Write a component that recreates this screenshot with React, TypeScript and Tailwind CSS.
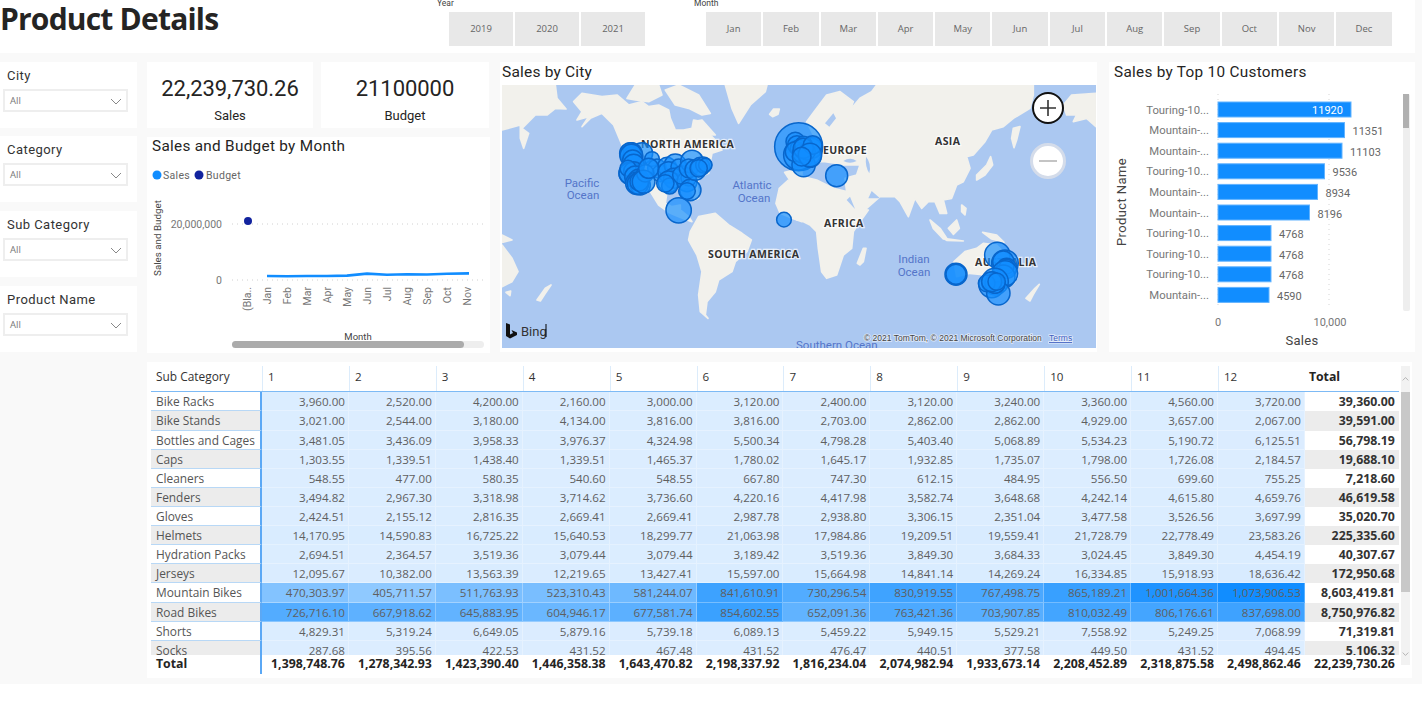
import React from "react";

const years = ["2019", "2020", "2021"];
const months = ["Jan", "Feb", "Mar", "Apr", "May", "Jun", "Jul", "Aug", "Sep", "Oct", "Nov", "Dec"];

const rows: [string, string[]][] = [
  ["Bike Racks", "3,960.00 2,520.00 4,200.00 2,160.00 3,000.00 3,120.00 2,400.00 3,120.00 3,240.00 3,360.00 4,560.00 3,720.00 39,360.00".split(" ")],
  ["Bike Stands", "3,021.00 2,544.00 3,180.00 4,134.00 3,816.00 3,816.00 2,703.00 2,862.00 2,862.00 4,929.00 3,657.00 2,067.00 39,591.00".split(" ")],
  ["Bottles and Cages", "3,481.05 3,436.09 3,958.33 3,976.37 4,324.98 5,500.34 4,798.28 5,403.40 5,068.89 5,534.23 5,190.72 6,125.51 56,798.19".split(" ")],
  ["Caps", "1,303.55 1,339.51 1,438.40 1,339.51 1,465.37 1,780.02 1,645.17 1,932.85 1,735.07 1,798.00 1,726.08 2,184.57 19,688.10".split(" ")],
  ["Cleaners", "548.55 477.00 580.35 540.60 548.55 667.80 747.30 612.15 484.95 556.50 699.60 755.25 7,218.60".split(" ")],
  ["Fenders", "3,494.82 2,967.30 3,318.98 3,714.62 3,736.60 4,220.16 4,417.98 3,582.74 3,648.68 4,242.14 4,615.80 4,659.76 46,619.58".split(" ")],
  ["Gloves", "2,424.51 2,155.12 2,816.35 2,669.41 2,669.41 2,987.78 2,938.80 3,306.15 2,351.04 3,477.58 3,526.56 3,697.99 35,020.70".split(" ")],
  ["Helmets", "14,170.95 14,590.83 16,725.22 15,640.53 18,299.77 21,063.98 17,984.86 19,209.51 19,559.41 21,728.79 22,778.49 23,583.26 225,335.60".split(" ")],
  ["Hydration Packs", "2,694.51 2,364.57 3,519.36 3,079.44 3,079.44 3,189.42 3,519.36 3,849.30 3,684.33 3,024.45 3,849.30 4,454.19 40,307.67".split(" ")],
  ["Jerseys", "12,095.67 10,382.00 13,563.39 12,219.65 13,427.41 15,597.00 15,664.98 14,841.14 14,269.24 16,334.85 15,918.93 18,636.42 172,950.68".split(" ")],
  ["Mountain Bikes", "470,303.97 405,711.57 511,763.93 523,310.43 581,244.07 841,610.91 730,296.54 830,919.55 767,498.75 865,189.21 1,001,664.36 1,073,906.53 8,603,419.81".split(" ")],
  ["Road Bikes", "726,716.10 667,918.62 645,883.95 604,946.17 677,581.74 854,602.55 652,091.36 763,421.36 703,907.85 810,032.49 806,176.61 837,698.00 8,750,976.82".split(" ")],
  ["Shorts", "4,829.31 5,319.24 6,649.05 5,879.16 5,739.18 6,089.13 5,459.22 5,949.15 5,529.21 7,558.92 5,249.25 7,068.99 71,319.81".split(" ")],
  ["Socks", "287.68 395.56 422.53 431.52 467.48 431.52 476.47 440.51 377.58 449.50 431.52 494.45 5,106.32".split(" ")],
];
const totals = "1,398,748.76 1,278,342.93 1,423,390.40 1,446,358.38 1,643,470.82 2,198,337.92 1,816,234.04 2,074,982.94 1,933,673.14 2,208,452.89 2,318,875.58 2,498,862.46 22,239,730.26".split(" ");

function heat(v: string) {
  const t = Math.min(1, parseFloat(v.replace(/,/g, "")) / 1073906);
  const mix = (a: number, b: number) => Math.round(a + (b - a) * t);
  return `rgb(${mix(220, 17)},${mix(237, 141)},255)`;
}

function Chevron({ className }: { className: string }) {
  return (
    <svg viewBox="0 0 12 7" className={className} fill="none" stroke="currentColor" strokeWidth="1">
      <path d="M1 1l5 5 5-5" />
    </svg>
  );
}

function Slicer({ title, className }: { title: string; className: string }) {
  return (
    <div className={`h-[66px] w-[137px] bg-white pl-[3px] pr-[9px] ${className}`}>
      <div className="h-[27px] pl-[4px] pt-[5px] font-['Roboto'] text-[13px] leading-[17px] tracking-[0.45px] text-[#333333]">{title}</div>
      <div className="flex h-[23px] items-center justify-between border-2 border-[#eeeeee] pl-[5px] pr-[4px] pt-[1px] font-['Open_Sans'] text-[9.5px] text-[#777777]">
        <span>All</span>
        <Chevron className="h-[7px] w-[12px] text-[#888888]" />
      </div>
    </div>
  );
}

function Kpi({ value, label, className }: { value: string; label: string; className: string }) {
  return (
    <div className={`flex h-[66px] flex-col items-center bg-white pt-[12px] font-['Roboto'] text-[#252423] ${className}`}>
      <div className="h-[30px] text-[22px] leading-[30px] tracking-[-0.05px]">{value}</div>
      <div className="mt-[4px] text-[13px] leading-[16px]">{label}</div>
    </div>
  );
}

function LineChart() {
  const labels = ["(Bla..", ...months.slice(0, 11)];
  return (
    <svg viewBox="147 161 343 192" className="h-[192px] w-[343px]" fontFamily="Roboto">
      <circle cx="157" cy="175" r="4.5" fill="#118DFF" />
      <text x="163" y="179" fontSize="10.5" fill="#666666" letterSpacing=".3">Sales</text>
      <circle cx="199" cy="175" r="4.5" fill="#12239E" />
      <text x="206" y="179" fontSize="10.5" fill="#666666" letterSpacing=".3">Budget</text>
      <text transform="translate(161 238) rotate(-90)" textAnchor="middle" fontSize="9.8" fill="#444444">Sales and Budget</text>
      <text x="222" y="228" textAnchor="end" fontSize="10.5" fill="#777777">20,000,000</text>
      <text x="222" y="284" textAnchor="end" fontSize="10.5" fill="#777777">0</text>
      <line x1="232" x2="484" y1="224" y2="224" stroke="#d0d0d0" strokeDasharray="1 4" />
      <line x1="232" x2="484" y1="280" y2="280" stroke="#d0d0d0" strokeDasharray="1 4" />
      <circle cx="248" cy="221" r="4" fill="#12239E" />
      <path d="M267 276 L287 276.3 L307 276 L327 276 L347 275.6 L367 273.6 L387 274.8 L407 274.2 L427 274.5 L447 273.8 L469 273.4" fill="none" stroke="#118DFF" strokeWidth="2.6" />
      {labels.map((m, i) => (
        <text key={m} transform={`translate(${251 + i * 20} 287) rotate(-90)`} textAnchor="end" fontSize="10.5" fill="#777777">{m}</text>
      ))}
      <text x="358" y="339.5" textAnchor="middle" fontSize="9.5" fill="#444444">Month</text>
      <rect x="232" y="341" width="252" height="7" rx="3.5" fill="#eeeeee" />
      <rect x="232" y="341" width="232" height="7" rx="3.5" fill="#ababab" />
    </svg>
  );
}

const bars: [string, number, number, number][] = [
  ["Touring-10...", 11920, 1351, 1],
  ["Mountain-...", 11351, 1344.5, 0],
  ["Mountain-...", 11103, 1342, 0],
  ["Touring-10...", 9536, 1324.5, 0],
  ["Mountain-...", 8934, 1317.5, 0],
  ["Mountain-...", 8196, 1309.5, 0],
  ["Touring-10...", 4768, 1271, 0],
  ["Touring-10...", 4768, 1271, 0],
  ["Touring-10...", 4768, 1271, 0],
  ["Mountain-...", 4590, 1269, 0],
];

function BarChart() {
  return (
    <svg viewBox="1109 86 306 266" className="h-[266px] w-[306px]" fontFamily="Roboto">
      <text transform="translate(1126 202) rotate(-90)" textAnchor="middle" fontSize="13" fill="#444444" letterSpacing=".4">Product Name</text>
      <line x1="1218" x2="1218" y1="94" y2="306" stroke="#d5d5d5" strokeDasharray="1 4" />
      <line x1="1329" x2="1329" y1="94" y2="306" stroke="#d5d5d5" strokeDasharray="1 4" />
      {bars.map(([name, v, right, inside], i) => {
        const y = 102 + i * 20.6;
        return (
          <g key={i}>
            <text x="1209" y={y + 11.5} textAnchor="end" fontSize="11.3" fill="#777777">{name}</text>
            <rect x="1218" y={y} width={right - 1218} height="15" fill="#118DFF" stroke="#62b3ff" strokeWidth="1" />
            {inside ? (
              <text x="1343" y={y + 12} textAnchor="end" fontSize="11" fill="#ffffff">{v}</text>
            ) : (
              <text x={right + 8} y={y + 12.5} fontSize="11" fill="#666666">{v}</text>
            )}
          </g>
        );
      })}
      <text x="1218" y="326" textAnchor="middle" fontSize="11" fill="#777777">0</text>
      <text x="1330" y="326" textAnchor="middle" fontSize="11" fill="#777777">10,000</text>
      <text x="1302" y="345" textAnchor="middle" fontSize="13" fill="#444444" letterSpacing=".3">Sales</text>
      <rect x="1403" y="94" width="7" height="217" rx="2" fill="#eeeeee" />
      <rect x="1403" y="94" width="6" height="34" fill="#b0b0b0" />
    </svg>
  );
}

const land = "#f2f1ec";
const water = "#abc8f1";
const leftLand = [
  "M215,50 L240,25 L300,35 L345,30 L380,60 L420,50 L440,65 L470,60 L500,75 L505,100 L520,135 L545,135 L570,130 L575,105 L600,110 L625,150 L640,165 L660,195 L630,205 L625,230 L620,265 L595,275 L585,300 L590,340 L578,345 L565,305 L520,310 L495,320 L490,355 L510,365 L535,360 L535,375 L560,395 L570,410 L555,405 L530,395 L505,385 L470,360 L445,320 L425,300 L400,270 L365,230 L360,180 L335,120 L300,85 L265,100 L240,125 L260,95 L225,105 L240,80 Z",
  "M375,40 L400,0 L470,0 L480,30 L440,50 L400,45 Z",
  "M490,15 L530,0 L590,30 L625,85 L600,90 L560,70 L520,60 Z",
  "M575,110 L600,105 L640,150 L610,150 Z",
  "M670,0 L795,0 L790,20 L745,60 L710,115 L690,70 Z",
  "M803,88 L815,72 L832,72 L828,88 L812,95 Z",
  "M565,440 L590,395 L640,385 L680,420 L720,445 L748,465 L735,500 L700,530 L690,560 L650,585 L640,620 L615,650 L610,690 L618,700 L595,680 L590,630 L600,560 L585,510 L560,465 Z",
  "M0,0 L160,0 L165,40 L192,72 L160,70 L135,90 L100,90 L60,130 L80,145 L65,190 L55,160 L55,120 L0,135 Z",
  "M0,480 L30,520 L48,560 L30,590 L0,605 Z",
  "M0,450 L30,465 L0,472 Z",
  "M105,645 L130,610 L147,600 L130,625 L115,648 Z",
  "M12,622 L26,618 L24,632 Z",
  "M900,275 L860,285 L832,310 L822,355 L835,385 L870,400 L900,410 Z",
  "M848,262 L900,250 L900,280 L860,280 Z",
  "M850,210 L880,200 L885,230 L860,235 Z",
];
const rightLand = [
  "M-10,270 L50,285 L100,310 L140,320 L165,370 L205,375 L180,410 L160,440 L155,490 L130,510 L110,570 L80,580 L65,560 L55,490 L50,440 L30,420 L0,405 L-10,405 Z",
  "M20,110 L50,70 L80,30 L120,20 L160,50 L150,75 L180,40 L215,20 L230,0 L700,0 L700,30 L690,70 L640,100 L610,125 L575,135 L555,170 L520,210 L500,215 L510,250 L490,290 L470,300 L455,340 L430,345 L440,385 L420,385 L405,350 L385,350 L365,370 L345,340 L325,395 L300,350 L285,335 L240,335 L200,370 L165,370 L140,320 L135,280 L170,270 L180,240 L130,240 L110,235 L75,230 L40,230 L15,200 L40,150 Z",
  "M640,130 L660,125 L650,165 L642,188 L635,160 Z",
  "M530,270 L560,240 L572,215 L578,240 L555,270 L530,285 Z",
  "M790,60 L815,30 L888,25 L888,125 L860,100 L820,110 L830,90 L800,90 Z",
  "M390,405 L420,430 L440,460 L430,462 L400,430 Z",
  "M445,430 L470,405 L478,430 L460,448 Z",
  "M430,460 L490,468 L440,466 Z",
  "M548,442 L590,450 L612,472 L575,462 Z",
  "M485,360 L498,370 L495,390 L485,380 Z",
  "M172,535 L190,490 L198,490 L190,530 L180,540 Z",
  "M462,530 L495,500 L530,490 L550,475 L590,480 L640,530 L645,590 L610,620 L590,605 L555,570 L510,565 L470,575 Z",
  "M678,640 L705,610 L718,598 L700,628 L690,648 Z",
];
const usCircles: number[][] = [
  [420, 205, 32], [450, 222, 22], [465, 250, 28], [475, 265, 25], [495, 245, 28], [388, 205, 32], [392, 215, 30], [390, 200, 26], [385, 205, 32], [388, 212, 34], [392, 225, 30], [395, 240, 32], [385, 265, 34], [383, 265, 32], [395, 260, 30], [378, 250, 24], [400, 275, 32], [410, 285, 32], [405, 295, 34], [415, 300, 30], [408, 296, 32], [412, 290, 28], [430, 265, 26], [425, 290, 34], [440, 250, 30],
  [520, 240, 33], [500, 262, 32], [530, 245, 23], [515, 280, 30], [500, 290, 32], [503, 303, 24], [490, 295, 26], [555, 290, 30], [560, 280, 23], [540, 270, 28], [565, 315, 32], [555, 318, 25], [570, 230, 34], [560, 250, 28], [580, 255, 31], [595, 245, 28], [605, 240, 24], [610, 240, 20], [590, 250, 26],
];
const leftCircles: number[][] = [
  ...usCircles,
  [530, 376, 38], [846, 404, 22],
  [890, 185, 72], [890, 210, 45], [905, 240, 35], [880, 170, 28], [885, 180, 28], [890, 190, 25], [895, 195, 22], [880, 200, 30], [900, 205, 28], [930, 190, 30], [925, 215, 32], [935, 180, 25], [905, 180, 26], [915, 200, 25],
];
const rightCircles: number[][] = [
  [10, 190, 30], [38, 180, 28], [30, 210, 35], [5, 215, 28],
  [110, 272, 33], [468, 568, 33], [468, 568, 30],
  [592, 510, 38], [615, 535, 40], [610, 530, 32], [620, 550, 30], [620, 545, 22], [610, 575, 35], [615, 565, 38], [585, 590, 40], [575, 600, 38], [595, 625, 35], [585, 595, 30], [560, 595, 25], [575, 590, 30], [590, 590, 26],
];

function MapView() {
  const halo = { stroke: "#ffffff", strokeWidth: 2.5, paintOrder: "stroke" as const, strokeOpacity: 0.7 };
  return (
    <div className="relative h-[263px] w-[594px] overflow-hidden bg-[#abc8f1]">
      <svg viewBox="0 0 594 263" className="h-[263px] w-[594px]" fontFamily="Open Sans">
        <defs>
          <filter id="soft" x="-5%" y="-5%" width="110%" height="110%">
            <feGaussianBlur stdDeviation="0.5" />
          </filter>
        </defs>
        <g filter="url(#soft)">
          <g transform="scale(0.3333)" fill={land} stroke={land} strokeWidth="5" strokeLinejoin="round">
            {leftLand.map((d, i) => <path key={i} d={d} />)}
          </g>
          <g transform="translate(298 0) scale(0.3333)" fill={land} stroke={land} strokeWidth="5" strokeLinejoin="round">
            {rightLand.map((d, i) => <path key={i} d={d} />)}
          </g>
          <g transform="translate(298 0) scale(0.3333)" fill={water}>
            <path d="M130,228 Q150,215 170,228 Q150,238 130,228 Z" />
            <path d="M198,215 Q215,235 208,265 Q195,245 198,215 Z" />
            <path d="M140,345 L165,372 L150,335 Z" />
            <path d="M75,115 L100,85 L108,100 L88,125 Z" />
            <path d="M205,340 L240,340 L215,318 Z" />
          </g>
        </g>
        <g fontSize="10.5" fontWeight="700" fill="#333333" letterSpacing=".4" style={halo}>
          <text x="139" y="63">NORTH AMERICA</text>
          <text x="321" y="69">EUROPE</text>
          <text x="433" y="60">ASIA</text>
          <text x="322" y="142">AFRICA</text>
          <text x="206" y="173">SOUTH AMERICA</text>
          <text x="473" y="181">AUSTRALIA</text>
        </g>
        <g fontSize="11.5" fill="#5475c9" textAnchor="middle" fontFamily="Roboto">
          <text x="80" y="102">Pacific</text>
          <text x="81" y="114">Ocean</text>
          <text x="250" y="104">Atlantic</text>
          <text x="252" y="117">Ocean</text>
          <text x="412" y="178">Indian</text>
          <text x="412" y="191">Ocean</text>
          <text x="294" y="264" textAnchor="start">Southern Ocean</text>
        </g>
        <g transform="scale(0.3333)" fill="#118DFF" fillOpacity="0.68" stroke="#0866cc" strokeWidth="4.5">
          {leftCircles.map(([x, y, r], i) => <circle key={i} cx={x} cy={y} r={r} />)}
        </g>
        <g transform="translate(298 0) scale(0.3333)" fill="#118DFF" fillOpacity="0.68" stroke="#0866cc" strokeWidth="4.5">
          {rightCircles.map(([x, y, r], i) => <circle key={i} cx={x} cy={y} r={r} />)}
        </g>
        <path d="M4,238 L8,239.5 L8,249.5 L11,248 L9.5,245 L15,247.5 L15,250 L8,253.5 L4,251 Z" fill="#111111" />
        <text x="19" y="251" fontSize="13" fontFamily="Roboto" fill="#333333">Bing</text>
        <line x1="44" x2="44" y1="239" y2="252" stroke="#000000" strokeWidth="1" />
        <g fontFamily="Liberation Sans" fontSize="8.5" fill="#444444" stroke="#ffffff" strokeWidth="1.6" strokeOpacity="0.6" style={{ paintOrder: "stroke" }}>
          <text x="362" y="256">© 2021 TomTom, © 2021 Microsoft Corporation</text>
          <text x="547" y="256" fill="#3f5fc0" textDecoration="underline">Terms</text>
        </g>
      </svg>
      <div className="absolute left-[530px] top-[7px] flex h-[32px] w-[32px] items-center justify-center rounded-full border-2 border-[#111111] bg-white">
        <svg viewBox="0 0 18 18" className="h-[18px] w-[18px]" stroke="#333333" strokeWidth="1.6"><path d="M9 1v16M1 9h16" /></svg>
      </div>
      <div className="absolute left-[528px] top-[58px] flex h-[36px] w-[36px] items-center justify-center rounded-full border-[3px] border-[#d4dcea] bg-white">
        <svg viewBox="0 0 18 2" className="h-[2px] w-[18px]" stroke="#c4c4c4" strokeWidth="2"><path d="M0 1h18" /></svg>
      </div>
    </div>
  );
}

const gridCols = "grid-cols-[111px_repeat(12,86.92px)_94px]";

function Matrix() {
  return (
    <div className="ml-[147px] mt-[9px] flex h-[316px] w-[1265px] bg-white pl-[4px] pt-[4px] font-['Open_Sans'] text-[11.6px] text-[#666666]">
      <div className="w-[1248px]">
        <div className={`grid h-[26px] ${gridCols} border-b border-[#7dbaf5] text-[#333333]`}>
          <div className="flex items-center pb-[4px] pl-[5px] text-[11.9px]">Sub Category</div>
          {Array.from({ length: 12 }, (_, i) => (
            <div key={i} className="flex items-center border-l border-[#dcecfb] pb-[4px] pl-[5px]">{i + 1}</div>
          ))}
          <div className="flex items-center pb-[3px] pl-[4px] text-[12.3px] font-bold text-[#252423]">Total</div>
        </div>
        <div className={`grid h-[263px] overflow-hidden ${gridCols} grid-rows-[19px_20px_19px_19px_19px_19px_19px_19px_19px_19px_20px_19px_19px_19px]`}>
          {rows.map(([name, vals], r) => (
            <React.Fragment key={name}>
              <div className={`flex items-center whitespace-nowrap border-b border-r-2 border-b-[#b8d8f6] border-r-[#5ba8f5] pl-[5px] pt-[1px] text-[11.9px] text-[#555555] ${r % 2 ? "bg-[#ececec]" : "bg-white"}`}>{name}</div>
              {vals.slice(0, 12).map((v, c) => (
                <div key={c} className="flex items-center justify-end border-b border-r border-white/30 pr-[3px] pt-[1px] text-[#5f5f5f]" style={{ backgroundColor: heat(v) }}>{v}</div>
              ))}
              <div className={`flex items-center justify-end pr-[4px] pt-[1px] text-[12.3px] font-bold text-[#333333] ${r % 2 ? "bg-[#ececec]" : "bg-white"}`}>{vals[12]}</div>
            </React.Fragment>
          ))}
        </div>
        <div className={`grid h-[19px] ${gridCols} text-[12.3px] font-bold text-[#252423]`}>
          <div className="flex items-center border-r-2 border-[#5ba8f5] pl-[5px]">Total</div>
          {totals.map((t, i) => (
            <div key={i} className="flex items-center justify-end whitespace-nowrap pr-[4px]">{t}</div>
          ))}
        </div>
      </div>
      <div className="ml-[2px] flex h-[299px] w-[9px] flex-col items-center bg-[#f2f2f2]">
        <div className="flex h-[26px] items-center"><Chevron className="h-[4px] w-[7px] rotate-180 text-[#888888]" /></div>
        <div className="h-[200px] w-full bg-[#c8c8c8]" />
        <div className="flex flex-1 items-end pb-[9px]"><Chevron className="h-[4px] w-[7px] text-[#888888]" /></div>
      </div>
    </div>
  );
}

export default function App() {
  return (
    <div className="h-[709px] w-[1422px] overflow-hidden bg-white">
      <div className="h-[684px] bg-[#f9f9f9]">
        <header className="flex h-[53px] w-[1415px] overflow-hidden bg-white">
          <h1 className="w-[437px] font-['Open_Sans'] text-[30px] font-bold leading-[38px] tracking-[-0.8px] text-[#252423]">Product Details</h1>
          <div className="w-[257px] text-[#444444]">
            <div className="h-[12px] font-['Roboto'] text-[8.5px] leading-[6px]">Year</div>
            <div className="ml-[12px] flex gap-[2px]">
              {years.map((y) => (
                <div key={y} className="flex h-[34px] w-[64px] items-center justify-center bg-[#e8e8e8] font-['Open_Sans'] text-[9.5px] text-[#666666]">{y}</div>
              ))}
            </div>
          </div>
          <div className="text-[#444444]">
            <div className="h-[12px] font-['Roboto'] text-[8.5px] leading-[6px]">Month</div>
            <div className="ml-[12px] flex gap-[2px]">
              {months.map((m) => (
                <div key={m} className="flex h-[34px] w-[55.3px] items-center justify-center bg-[#e8e8e8] font-['Open_Sans'] text-[9.5px] text-[#666666]">{m}</div>
              ))}
            </div>
          </div>
        </header>
        <main className="flex pt-[9px]">
          <aside className="w-[147px]">
            <Slicer title="City" className="" />
            <Slicer title="Category" className="mt-2" />
            <Slicer title="Sub Category" className="mt-[9px]" />
            <Slicer title="Product Name" className="mt-[9px]" />
          </aside>
          <section className="w-[353px]">
            <div className="flex w-[343px] gap-[8px]">
              <Kpi value="22,239,730.26" label="Sales" className="w-[166px]" />
              <Kpi value="21100000" label="Budget" className="w-[168px]" />
            </div>
            <div className="mt-[9px] h-[216px] w-[343px] bg-white">
              <div className="h-[24px] pl-[5px] font-['Roboto'] text-[15.3px] leading-[19px] tracking-[0.3px] text-[#252423]">Sales and Budget by Month</div>
              <LineChart />
            </div>
          </section>
          <section className="mr-[12px] h-[290px] w-[597px] bg-white pl-[2px]">
            <div className="h-[23px] font-['Roboto'] text-[15.5px] leading-[20px] tracking-[0.2px] text-[#252423]">Sales by City</div>
            <MapView />
          </section>
          <section className="h-[290px] w-[306px] bg-white">
            <div className="h-[24px] pl-[5px] font-['Roboto'] text-[15.3px] leading-[20px] tracking-[0.3px] text-[#252423]">Sales by Top 10 Customers</div>
            <BarChart />
          </section>
        </main>
        <Matrix />
      </div>
    </div>
  );
}
